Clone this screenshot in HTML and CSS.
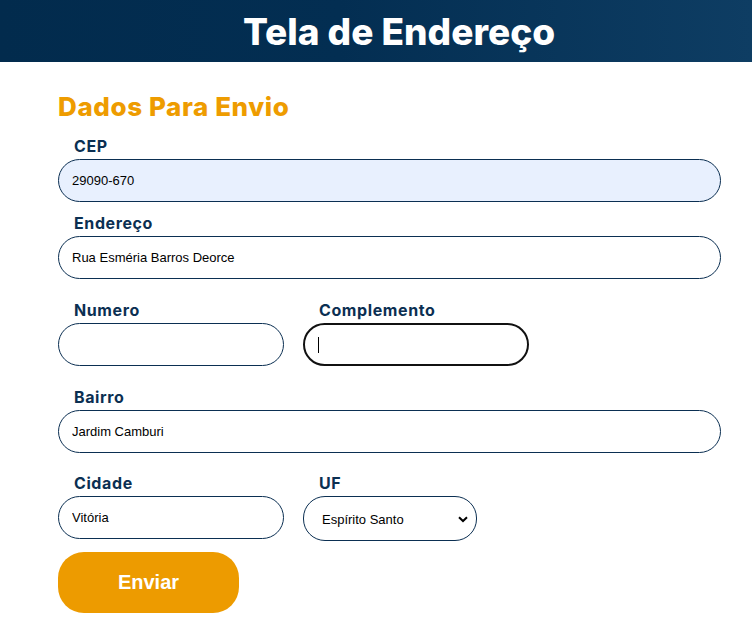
FILE: index.html
```html
<!DOCTYPE html>
<html lang="pt-BR">
<head>
<meta charset="utf-8">
<title>Tela de Endereço</title>
<link rel="stylesheet" href="styles.css">
</head>
<body>
<header class="topo">
  <h1 class="titulo">Tela de Endereço</h1>
</header>
<main class="conteudo">
  <h2 class="subtitulo">Dados Para Envio</h2>
  <form class="form">
    <div class="campo campo-cep">
      <label class="rotulo" for="cep">CEP</label>
      <input class="entrada entrada-cheia autofill" id="cep" type="text" value="29090-670">
    </div>
    <div class="campo campo-end">
      <label class="rotulo" for="end">Endereço</label>
      <input class="entrada entrada-cheia" id="end" type="text" value="Rua Esméria Barros Deorce">
    </div>
    <div class="linha linha-num">
      <div class="campo">
        <label class="rotulo" for="num">Numero</label>
        <input class="entrada entrada-meia" id="num" type="text">
      </div>
      <div class="campo">
        <label class="rotulo" for="comp">Complemento</label>
        <div class="entrada entrada-meia foco"><span class="cursor"></span></div>
      </div>
    </div>
    <div class="campo campo-bairro">
      <label class="rotulo" for="bairro">Bairro</label>
      <input class="entrada entrada-cheia" id="bairro" type="text" value="Jardim Camburi">
    </div>
    <div class="linha linha-cid">
      <div class="campo">
        <label class="rotulo" for="cid">Cidade</label>
        <input class="entrada entrada-meia" id="cid" type="text" value="Vitória">
      </div>
      <div class="campo">
        <label class="rotulo" for="uf">UF</label>
        <div class="selecao">
          <span>Espírito Santo</span>
          <svg class="seta" width="10" height="7" viewBox="0 0 10 7"><path d="M1 1.2 L5 5 L9 1.2" fill="none" stroke="#000" stroke-width="2"/></svg>
        </div>
      </div>
    </div>
    <button class="botao" type="button">Enviar</button>
  </form>
</main>
</body>
</html>
```
FILE: styles.css
```css
html, body {
  margin: 0;
  padding: 0;
  background: #fff;
}
.topo {
  height: 62px;
  background: linear-gradient(90deg, #022b4d 0%, #032e52 45%, #0e3d63 100%);
  display: flex;
  align-items: center;
  justify-content: center;
  padding-left: 46px;
}
.titulo {
  margin: 0;
  color: #fff;
  font-family: "Inter", "Open Sans", sans-serif;
  font-weight: 800;
  font-size: 37px;
  line-height: 1;
}
.conteudo {
  padding: 0 0 0 58px;
}
.subtitulo {
  margin: 0;
  padding-top: 29px;
  color: #ee9c00;
  font-family: "Inter", "Open Sans", sans-serif;
  font-weight: 800;
  font-size: 26px;
  letter-spacing: 0.6px;
  line-height: 32px;
  height: 45px;
}
.form {
  display: flex;
  flex-direction: column;
}
.campo {
  display: flex;
  flex-direction: column;
}
.campo-cep { margin-bottom: 11px; }
.campo-end { margin-bottom: 21px; }
.linha-num { margin-bottom: 21px; }
.campo-bairro { margin-bottom: 20px; }
.linha-cid { margin-bottom: 11px; }
.linha {
  display: flex;
  align-items: flex-start;
  gap: 19px;
}
.rotulo {
  font-family: "Inter", "Open Sans", sans-serif;
  font-weight: 700;
  font-size: 16px;
  letter-spacing: 0.6px;
  line-height: 20px;
  color: #0b2f52;
  margin-left: 16px;
  margin-bottom: 3px;
}
.entrada {
  box-sizing: border-box;
  height: 43px;
  border: 1px solid #0b2f52;
  border-radius: 22px;
  padding: 0 13px;
  font-family: "Liberation Sans", Arial, sans-serif;
  font-size: 13px;
  color: #000;
  background: #fff;
  outline: none;
}
.entrada-cheia {
  width: 663px;
}
.entrada-meia {
  width: 226px;
}
.autofill {
  background: #e8f0fe;
}
.foco {
  border: 2px solid #111;
  display: flex;
  align-items: center;
  padding-left: 13px;
}
.cursor {
  display: block;
  width: 1px;
  height: 16px;
  background: #000;
}
.selecao {
  box-sizing: border-box;
  width: 174px;
  height: 45px;
  border: 1px solid #0b2f52;
  border-radius: 22px;
  display: flex;
  align-items: center;
  justify-content: space-between;
  padding: 2px 8px 0 18px;
  font-family: "Liberation Sans", Arial, sans-serif;
  font-size: 13px;
  color: #000;
}
.seta {
  display: block;
}
.botao {
  width: 181px;
  height: 61px;
  border: none;
  border-radius: 26px;
  background: #ed9b00;
  color: #fff;
  font-family: "Liberation Sans", Arial, sans-serif;
  font-weight: 700;
  font-size: 20px;
  padding: 0;
}
```
